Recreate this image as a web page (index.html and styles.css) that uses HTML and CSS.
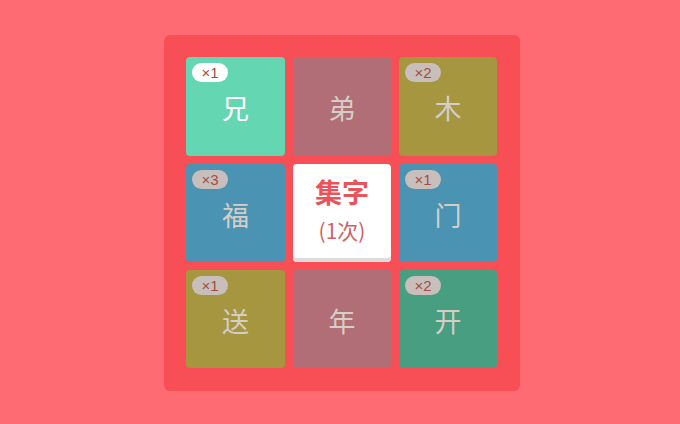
FILE: index.html
```html
<!DOCTYPE html>
<html lang="zh">
<head>
<meta charset="utf-8">
<link rel="stylesheet" href="styles.css">
</head>
<body>
<div class="stage">
  <div class="board">
    <div class="tile t-mint active"><span class="badge light">×1</span><span class="ch">兄</span></div>
    <div class="tile t-rose"><span class="ch">弟</span></div>
    <div class="tile t-olive"><span class="badge">×2</span><span class="ch">木</span></div>
    <div class="tile t-blue"><span class="badge">×3</span><span class="ch">福</span></div>
    <div class="tile center"><span class="title">集字</span><span class="count">(1次)</span></div>
    <div class="tile t-blue"><span class="badge">×1</span><span class="ch">门</span></div>
    <div class="tile t-olive"><span class="badge">×1</span><span class="ch">送</span></div>
    <div class="tile t-rose"><span class="ch">年</span></div>
    <div class="tile t-green"><span class="badge">×2</span><span class="ch">开</span></div>
  </div>
</div>
</body>
</html>
```
FILE: styles.css
```css
html, body {
  margin: 0;
  padding: 0;
}
body {
  width: 680px;
  height: 424px;
  background: #ff6b72;
  font-family: "Noto Sans CJK SC", "Noto Sans", sans-serif;
  overflow: hidden;
}
.stage {
  display: flex;
  justify-content: center;
  padding-top: 35px;
  padding-left: 4px;
}
.board {
  width: 356px;
  height: 356px;
  box-sizing: border-box;
  padding: 22px 23px 22px 22px;
  background: #f84f56;
  border-radius: 6px;
  display: grid;
  grid-template-columns: 99px 98px 98px;
  grid-template-rows: 99px 98px 98px;
  column-gap: 8px;
  row-gap: 8px;
}
.tile {
  position: relative;
  border-radius: 4px;
  display: flex;
  align-items: center;
  justify-content: center;
}
.t-mint { background: #64d6b2; }
.t-rose { background: #b16e77; }
.t-olive { background: #a5963f; }
.t-blue { background: #4a93b2; }
.t-green { background: #479e80; }
.ch {
  font-size: 27px;
  line-height: 1;
  color: #d6cdc6;
  margin-top: 2px;
}
.active .ch { color: #ffffff; }
.badge {
  position: absolute;
  left: 6px;
  top: 6px;
  height: 19px;
  width: 36px;
  border-radius: 10px;
  background: #c8bfbd;
  color: #a24e3e;
  font-family: "Liberation Sans", Arial, sans-serif;
  font-size: 15px;
  line-height: 19px;
  text-align: center;
}
.badge.light { background: #ffffff; }
.center {
  background: #ffffff;
  flex-direction: column;
  box-shadow: inset 0 -4px 0 #dcdcdc;
  box-sizing: border-box;
  padding-bottom: 8px;
  gap: 15px;
}
.title {
  font-size: 27px;
  font-weight: 700;
  color: #e8545a;
  line-height: 1;
}
.count {
  font-size: 21px;
  color: #d15f68;
  line-height: 1;
}
```
